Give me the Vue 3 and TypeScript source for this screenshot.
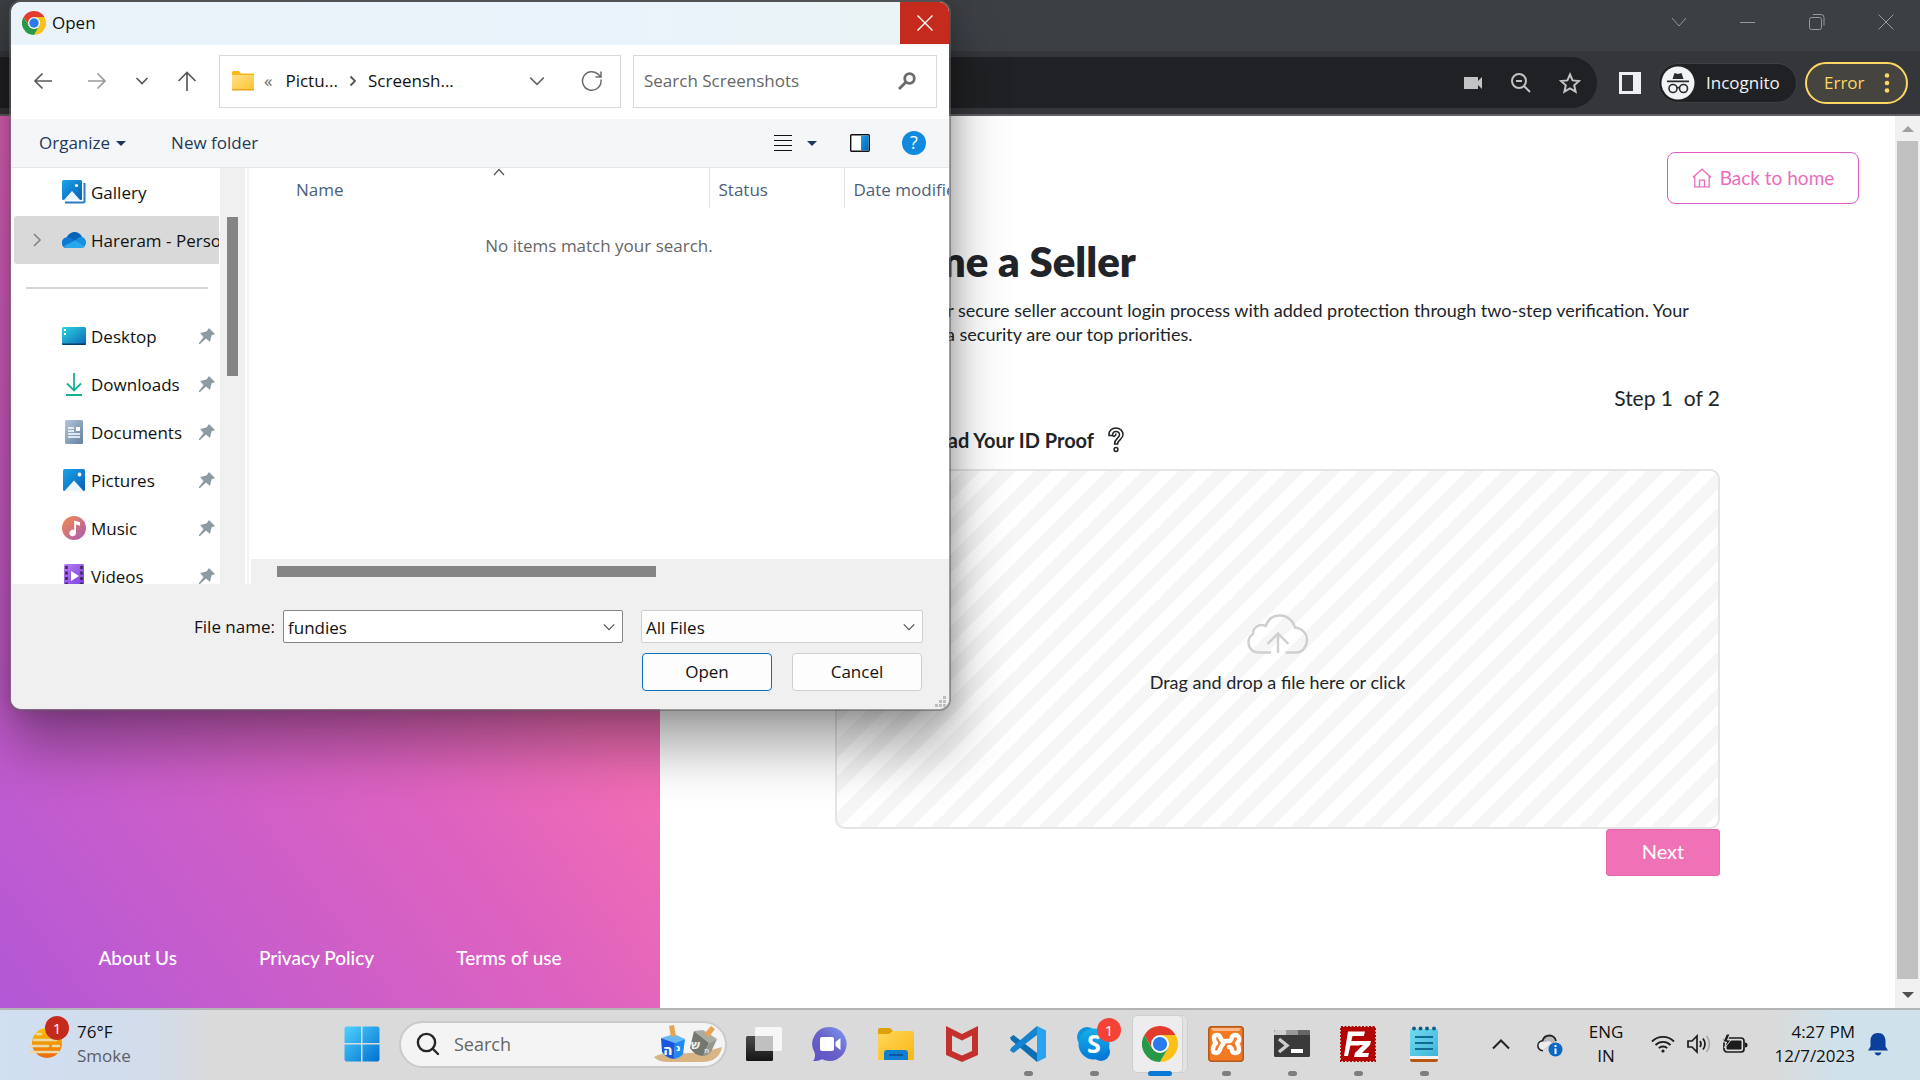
<script setup lang="ts">
import { ref } from 'vue'

interface Place {
  id: string
  label: string
  pinned: boolean
}

const places: Place[] = [
  { id: 'desktop', label: 'Desktop', pinned: true },
  { id: 'downloads', label: 'Downloads', pinned: true },
  { id: 'documents', label: 'Documents', pinned: true },
  { id: 'pictures', label: 'Pictures', pinned: true },
  { id: 'music', label: 'Music', pinned: true },
  { id: 'videos', label: 'Videos', pinned: true },
]

const footerLinks: string[] = ['About Us', 'Privacy Policy', 'Terms of use']
const fileName = ref('fundies')
const fileType = ref('All Files')
const query = ref('')
</script>

<template>
  <div class="desktop">
    <svg class="defs" width="0" height="0" aria-hidden="true">
      <defs>
        <linearGradient id="sky" x1="0" y1="0" x2="1" y2="1">
          <stop offset="0" stop-color="#1ca4ea" /><stop offset="1" stop-color="#0560b4" />
        </linearGradient>
        <linearGradient id="teal" x1="0" y1="0" x2="1" y2="1">
          <stop offset="0" stop-color="#2fd5e0" /><stop offset="1" stop-color="#0a66b8" />
        </linearGradient>
        <linearGradient id="slate" x1="0" y1="0" x2="1" y2="1">
          <stop offset="0" stop-color="#b4c6da" /><stop offset="1" stop-color="#64809f" />
        </linearGradient>
        <linearGradient id="sunset" x1="0" y1="0" x2="1" y2="1">
          <stop offset="0" stop-color="#f58c4b" /><stop offset="1" stop-color="#a75bb8" />
        </linearGradient>
        <linearGradient id="violet" x1="0" y1="0" x2="1" y2="1">
          <stop offset="0" stop-color="#b67cf0" /><stop offset="1" stop-color="#7b3be0" />
        </linearGradient>
        <linearGradient id="win" x1="0" y1="0" x2="1" y2="1">
          <stop offset="0" stop-color="#4fd2ff" /><stop offset="1" stop-color="#0070d0" />
        </linearGradient>
        <linearGradient id="manila" x1="0" y1="0" x2="1" y2="1">
          <stop offset="0" stop-color="#ffe08a" /><stop offset="1" stop-color="#fcc42e" />
        </linearGradient>
        <linearGradient id="folder" x1="0" y1="0" x2="1" y2="1">
          <stop offset="0" stop-color="#ffd75e" /><stop offset="1" stop-color="#f9b710" />
        </linearGradient>
        <linearGradient id="chat" x1="0" y1="1" x2="1" y2="0">
          <stop offset="0" stop-color="#5b50c4" /><stop offset=".5" stop-color="#6a62c8" /><stop offset="1" stop-color="#7d9cf2" />
        </linearGradient>
        <linearGradient id="sun" x1="0" y1="0" x2="0" y2="1">
          <stop offset="0" stop-color="#fcc400" /><stop offset="1" stop-color="#ea6a0a" />
        </linearGradient>
        <linearGradient id="skype" x1="0" y1="0" x2="0" y2="1">
          <stop offset="0" stop-color="#16b1ea" /><stop offset="1" stop-color="#0478d8" />
        </linearGradient>
        <linearGradient id="note" x1="0" y1="0" x2="1" y2="1">
          <stop offset="0" stop-color="#72dbf0" /><stop offset="1" stop-color="#3fb4d8" />
        </linearGradient>
        <linearGradient id="dark" x1="0" y1="0" x2="0" y2="1">
          <stop offset="0" stop-color="#4a4a4a" /><stop offset="1" stop-color="#151515" />
        </linearGradient>
        <symbol id="chrome-logo" viewBox="0 0 48 48">
          <circle cx="24" cy="24" r="24" fill="#fff" />
          <path d="M24 12h20.8A24 24 0 0 0 3.2 12l10.400 18z" fill="#e33b2e" />
          <path d="M34.400 30 24 48A24 24 0 0 0 44.800 12H24z" fill="#fbc116" />
          <path d="M13.600 30 3.200 12A24 24 0 0 0 24 48l10.400-18z" fill="#279847" />
          <circle cx="24" cy="24" r="12" fill="#fff" /><circle cx="24" cy="24" r="9.500" fill="#2b7bee" />
        </symbol>
        <symbol id="chev-down" viewBox="0 0 16 16">
          <path d="M2 5l6 6 6-6" fill="none" stroke="currentColor" stroke-width="1.400" />
        </symbol>
      </defs>
    </svg>

    <div class="browser">
      <header class="tabstrip">
        <button class="win-btn" aria-label="Search tabs"><svg width="16" height="16" viewBox="0 0 16 16"><path d="M1 4l7 8 7-8" /></svg></button>
        <button class="win-btn" aria-label="Minimize"><svg width="16" height="16" viewBox="0 0 16 16"><path d="M0 8.500h15" /></svg></button>
        <button class="win-btn" aria-label="Restore"><svg width="16" height="16" viewBox="0 0 16 16"><rect x=".5" y="3.500" width="12" height="12" rx="2" /><path d="M4 .5h8a3 3 0 0 1 3 3v8" /></svg></button>
        <button class="win-btn" aria-label="Close"><svg width="16" height="16" viewBox="0 0 16 16"><path d="M.5.5l15 15M15.500.5l-15 15" /></svg></button>
      </header>
      <div class="toolbar">
        <div class="omnibox">
          <svg width="20" height="20" viewBox="0 0 20 20" fill="#c2c3c5"><path d="M1 4h14v4l4-4v12l-4-4v4H1z" /></svg>
          <svg width="20" height="20" viewBox="0 0 20 20" fill="none" stroke="#c2c3c5" stroke-width="2"><circle cx="8" cy="8" r="7" /><path d="M13 13l6 6M5 8h6" /></svg>
          <svg width="22" height="22" viewBox="0 0 22 22" fill="none" stroke="#c2c3c5" stroke-width="2"><path d="M11 2.500l2.600 5.900 6.400.6-4.800 4.300 1.400 6.300L11 16.300l-5.600 3.300 1.400-6.300L2 9l6.400-.6z" /></svg>
        </div>
        <button class="panel-btn" aria-label="Side panel"><svg width="22" height="22" viewBox="0 0 22 22"><path fill-rule="evenodd" d="M0 0h22v22H0zM3 3v16h11V3z" fill="#eef0f3" /></svg></button>
        <button class="incognito">
          <svg width="34" height="34" viewBox="0 0 34 34">
            <circle cx="17" cy="17" r="16.500" fill="#f1f3f4" />
            <path d="M11.500 13l2-6 3.500 1 3.500-1 2 6zM6 14.500h22v1.800H6z" fill="#2a2b2e" />
            <g fill="none" stroke="#2a2b2e" stroke-width="1.600"><circle cx="12" cy="22.500" r="4" /><circle cx="22.500" cy="22.500" r="4" /><path d="M16 22q1.200-1 2.500 0" /></g>
          </svg>
          <span>Incognito</span>
        </button>
        <button class="error-btn">
          <span>Error</span>
          <svg width="6" height="20" viewBox="0 0 6 20" fill="#fdd663"><circle cx="3" cy="2.500" r="2.300" /><circle cx="3" cy="10" r="2.300" /><circle cx="3" cy="17.500" r="2.300" /></svg>
        </button>
      </div>

      <div class="viewport">
        <aside class="promo">
          <nav class="links"><a v-for="l in footerLinks" :key="l" href="#">{{ l }}</a></nav>
        </aside>
        <main class="page">
          <a class="home" href="#">
            <svg width="20" height="20" viewBox="0 0 20 20" fill="none" stroke="#ea6cbd" stroke-width="1.300"><path d="M.8 9.600L10 1.200l9.200 8.400M2.800 8.200v10.600h14.400V8.200M7.500 18.600v-6.400h5v6.400" /></svg>
            <span>Back to home</span>
          </a>
          <section class="form">
            <h1>Become a Seller</h1>
            <p class="lead">Experience our secure seller account login process with added protection through two-step verification. Your safety and data security are our top priorities.</p>
            <p class="step">Step 1 &nbsp;of 2</p>
            <label class="field" for="proof">Please Upload Your ID Proof
              <svg width="16" height="26" viewBox="0 0 16 26" fill="none" stroke="#212529" stroke-width="1.500"><path d="M1 8.500C.6 3.500 4 1 8 1s7 2.800 7 6.800c0 4.600-5.400 5-5.400 9.200H6.600c-.4-5 4.900-5.800 4.900-9.200 0-2-1.500-3.400-3.500-3.400-2.400 0-3.500 1.500-3.500 4.100zM4.600 8.800c1.500 1.400 3.400-.2 3.400-2.200" /><circle cx="8" cy="22.500" r="1.900" /></svg>
            </label>
            <button id="proof" class="dropzone">
              <svg width="62" height="40" viewBox="0 0 62 40" fill="none" stroke="#cfcfcf" stroke-width="2.400"><path d="M24 38.500H12C5.500 38.500 1.500 34 1.500 28.500c0-4 2-7 4.500-8.500 0-7 7-11 12.800-8C21 5 26 1.500 33 1.500s13 4.500 15 12C55 14.500 60 19 60 26c0 7-5 12.500-11 12.500H38.500M31 39V20M20.500 30L31 19.500 41.500 30" /></svg>
              <span>Drag and drop a file here or click</span>
            </button>
            <button class="next">Next</button>
          </section>
        </main>
        <div class="vscroll" aria-hidden="true"><i class="up"></i><i class="bar"></i><i class="down"></i></div>
      </div>
    </div>

    <footer class="taskbar">
      <div class="weather">
        <div class="weather-icon">
          <svg width="34" height="32" viewBox="0 0 34 32">
            <circle cx="18" cy="15" r="15" fill="url(#sun)" />
            <g stroke="#ecd9a8" stroke-width="2.600" stroke-linecap="round"><path d="M8 6h4M5 12h22M1 18h18M24 18h6M1 24h28" /></g>
          </svg>
          <span class="count">1</span>
        </div>
        <div class="stack"><span>76°F</span><span class="muted">Smoke</span></div>
      </div>
      <div class="apps">
        <button class="app" aria-label="Start">
          <svg width="36" height="36" viewBox="0 0 36 36"><path d="M2 .5h15V17H.5V2zM18.500.5H34L35.500 2v15h-17zM.5 18.500H17v17H2L.5 34zM18.500 18.500h17V34L34 35.500H18.500z" fill="url(#win)" /></svg>
        </button>
        <label class="searchbox">
          <svg width="24" height="24" viewBox="0 0 24 24" fill="none" stroke="#252525" stroke-width="2.400" stroke-linecap="round"><circle cx="10.500" cy="10.500" r="8.600" /><path d="M17 17l5 5" /></svg>
          <input type="text" placeholder="Search" aria-label="Search Windows" />
          <svg width="68" height="38" viewBox="0 0 68 38">
            <path d="M0 32q10-6 26-4 20 1 42-6-3 15-20 15H14Q4 37 0 32z" fill="#d9b585" />
            <path d="M7 13l13-4 11 5-10 4z" fill="#6ab8f2" /><path d="M7 13l14 5-1 16q-8-1-12-7z" fill="#1b56e0" /><path d="M21 18l10-4-2 15q-3 4-9 5z" fill="#1f8bf0" />
            <path d="M15 1l5-1 2 11-5 1z" fill="#e6a459" />
            <path d="M40 6l9-1 14 9-8 4z" fill="#a9aca4" /><path d="M40 6l15 12-6 13q-9-1-13-8z" fill="#74776f" /><path d="M55 18l8-4-6 13q-3 4-8 4z" fill="#94978e" />
            <path d="M57 1l4 3-6 8-5-3z" fill="#e6a459" />
            <text x="9" y="30" font-size="14" font-weight="bold" fill="#fff" font-family="DejaVu Sans, sans-serif">ה</text>
            <text x="22" y="26" font-size="10" font-weight="bold" fill="#fff" font-family="DejaVu Sans, sans-serif">נ</text>
            <text x="37" y="24" font-size="12" font-weight="bold" fill="#eee" font-family="DejaVu Sans, sans-serif">ש</text>
            <text x="50" y="28" font-size="8" font-weight="bold" fill="#ddd" font-family="DejaVu Sans, sans-serif">ח</text>
          </svg>
        </label>
        <button class="app" aria-label="Task view">
          <svg width="36" height="36" viewBox="0 0 36 36"><rect y="10" width="27" height="25" rx="1.500" fill="url(#dark)" /><rect x="9" y="1" width="27" height="24" rx="1.500" fill="#f7f7f7" /><path d="M9 10h18v15H10.500L9 23.500z" fill="#c0c0c0" /></svg>
        </button>
        <button class="app" aria-label="Chat">
          <svg width="36" height="36" viewBox="0 0 36 36"><path d="M18 1a17 17 0 1 1-8 32.200Q5 35.500 1 35q3-3 1.600-8.400A17 17 0 0 1 18 1z" fill="url(#chat)" /><rect x="8" y="11" width="14" height="14" rx="2" fill="#fff" /><path d="M23.500 16l5-4v12l-5-4z" fill="#fff" /></svg>
        </button>
        <button class="app" aria-label="File Explorer">
          <svg width="36" height="36" viewBox="0 0 36 36"><path d="M0 4q0-2 2-2h10l4 4v3H0z" fill="#e0a008" /><path d="M0 8h11l4-3h19q2 0 2 2v27H0z" fill="url(#folder)" /><path d="M6 34v-7q0-3 3-3h18q3 0 3 3v7z" fill="#0f7fd2" /><path d="M11 29h14" stroke="#0a559c" stroke-width="2" /></svg>
        </button>
        <button class="app" aria-label="McAfee">
          <svg width="36" height="36" viewBox="0 0 36 36"><path fill-rule="evenodd" d="M2 0l16 8 16-8v29l-16 7-16-7zM8 9.500v15.500l10 4.500L28 25V9.500L18 14.500z" fill="#c4302e" /></svg>
        </button>
        <button class="app running" aria-label="Visual Studio Code">
          <svg width="36" height="36" viewBox="0 0 36 36"><path d="M0 11.500L3.500 9 27 27v9L1 14z" fill="#0b6fb4" /><path d="M0 24.500L3.500 27 27 9V0L1 22z" fill="#1484ce" /><path d="M27 0l9 4.500v27L27 36z" fill="#27a3f0" /></svg>
        </button>
        <button class="app running" aria-label="Skype">
          <svg width="36" height="36" viewBox="0 0 36 36"><circle cx="11" cy="11" r="10" fill="#0e93dc" /><circle cx="25" cy="26" r="9" fill="#0a78d4" /><circle cx="18" cy="18" r="15.500" fill="url(#skype)" /><text x="18" y="27" font-size="25" font-weight="bold" text-anchor="middle" fill="#fff" font-family="Open Sans, sans-serif">S</text></svg>
          <span class="count bright">1</span>
        </button>
        <button class="app active" aria-label="Google Chrome"><span class="tile2"></span><span class="tile"></span><svg width="36" height="36"><use href="#chrome-logo" /></svg></button>
        <button class="app running" aria-label="XAMPP">
          <svg width="36" height="36" viewBox="0 0 36 36"><rect x=".8" y=".8" width="34.400" height="34.400" rx="3" fill="#f37a23" stroke="#b35a1c" stroke-width="1.600" /><path d="M3 2h30l-2 3H5z" fill="#f9b98a" /><g fill="none" stroke="#fff" stroke-width="4.400" stroke-linejoin="round" stroke-linecap="round"><path d="M15 18q0-3 3-3h4q2-2 2-4 1-2 3.500-2T31 12t-2 5q2 3 2 6.500T27 27q-3 0-3-3.500Q23 21 21 21" /><path d="M15 18q-2 2-3 5.500-1 3.500-4 3.500t-3-3.500T8 17q-2-2-2-5t3-3 3.500 3q1 3 4 3.500" /></g></svg>
        </button>
        <button class="app running" aria-label="Terminal">
          <svg width="36" height="36" viewBox="0 0 36 36"><rect y="4" width="36" height="27" rx="1.500" fill="#3a3a3a" /><path d="M1.500 4H12v5H0V5.500z" fill="#cfcfcf" /><path d="M12 4h12v5H12z" fill="#999" /><path d="M24 4h10.500L36 5.500V9H24z" fill="#666" /><path d="M5 13l8 6.500L5 26" fill="none" stroke="#ccc" stroke-width="3.400" /><path d="M17 23h12v4H17z" fill="#fff" /></svg>
        </button>
        <button class="app running" aria-label="FileZilla">
          <svg width="36" height="36" viewBox="0 0 36 36"><rect x="1" y="1" width="34" height="34" fill="#b30404" stroke="#b30404" stroke-width="2" stroke-dasharray="2 1.500" /><path d="M8 5.500h17l-1.200 4.500H12.500L11.400 15h9l-1 4.500h-9L8 30H4z" fill="#fff" /><path d="M17 15h14l-1 4-8 8h7l-1 4H14l1-4 8-8h-7z" fill="#fff" /></svg>
        </button>
        <button class="app running" aria-label="Notepad">
          <svg width="36" height="36" viewBox="0 0 36 36"><path d="M4 31h28v2q0 3-2 3H6q-2 0-2-3z" fill="#b9560f" /><path d="M4 28h28v5H4z" fill="#f3f3f3" /><path d="M4 5q0-2 2-2h24q2 0 2 2v25H4z" fill="url(#note)" /><path d="M9 11h18M9 17h18M9 23h18" stroke="#0f6b96" stroke-width="2" /><g fill="#12597c"><circle cx="8" cy="2.500" r="1.900" /><circle cx="14.500" cy="2.500" r="1.900" /><circle cx="21" cy="2.500" r="1.900" /><circle cx="28" cy="2.500" r="1.900" /></g></svg>
        </button>
      </div>
      <div class="tray">
        <svg width="18" height="12" viewBox="0 0 18 12" fill="none" stroke="#222" stroke-width="2"><path d="M1 10.500l8-8 8 8" /></svg>
        <svg class="cloud" width="26" height="26" viewBox="0 0 26 26"><path d="M6 19.500C2.500 19.500 1 17 1 14.500S3 10 5.500 10C6.500 6 9.500 4.500 12.500 4.500S18.500 6.500 19 10" fill="#b9b9b9" stroke="#222" stroke-width="1.800" /><path d="M1.500 14C3 10.500 6 10 8 11l4-1 3 2-9 7q-4-.5-4.500-5z" fill="#eee" /><circle cx="18.500" cy="18.500" r="7" fill="#0d67c4" /><path d="M18.500 14v2M18.500 17.500V23" stroke="#fff" stroke-width="2" /></svg>
        <div class="stack lang"><span>ENG</span><span>IN</span></div>
        <svg width="24" height="20" viewBox="0 0 24 20" fill="none" stroke="#1c1c1c" stroke-width="1.800"><path d="M1 7.500a15.500 15.500 0 0 1 22 0M4.500 11a10.500 10.500 0 0 1 15 0M7.800 14.200a6 6 0 0 1 8.400 0" /><circle cx="12" cy="17" r="1.600" fill="#1c1c1c" stroke="none" /></svg>
        <svg class="vol" width="24" height="20" viewBox="0 0 24 20" fill="none" stroke="#1c1c1c" stroke-width="1.700"><path d="M1 7h4l5-5v16l-5-5H1z" /><path d="M13 7q2 3 0 6M16 4.500q4 5.500 0 11" /><path d="M19.500 2q6 8 0 16" stroke="#aaa" /></svg>
        <svg class="bat" width="26" height="20" viewBox="0 0 26 20"><rect x="2" y="4" width="20" height="14" rx="3" fill="none" stroke="#1c1c1c" stroke-width="1.700" /><rect x="4.500" y="6.500" width="15" height="9" rx="1" fill="#1c1c1c" /><path d="M23 8.500q2.500 0 2.500 2.500T23 13.500z" fill="#1c1c1c" /><path d="M4.500 0L1 8h3.500l-2 6L9 6H5.500L8 0z" fill="#1c1c1c" stroke="#dadada" /></svg>
        <div class="stack clock"><span>4:27 PM</span><span>12/7/2023</span></div>
        <svg class="bell" width="20" height="24" viewBox="0 0 20 24" fill="#0a3f9a"><path d="M10 1c5 0 7.500 3.500 7.500 8v5.500L20 18.500H0l2.500-4V9C2.500 4.500 5 1 10 1zM6.500 20.500h7q-1 3-3.500 3t-3.500-3z" /></svg>
      </div>
    </footer>

    <div class="dialog" role="dialog" aria-label="Open">
      <div class="titlebar">
        <svg width="24" height="24"><use href="#chrome-logo" /></svg>
        <span>Open</span>
        <button class="close" aria-label="Close dialog"><svg width="16" height="16" viewBox="0 0 16 16" stroke="#fff" stroke-width="1.400"><path d="M.5.5l15 15M15.500.5l-15 15" /></svg></button>
      </div>
      <div class="navrow">
        <button class="nav back" aria-label="Back"><svg width="20" height="20" viewBox="0 0 20 20"><path d="M19 10H2M9.500 2.500L2 10l7.500 7.500" /></svg></button>
        <button class="nav dim" aria-label="Forward"><svg width="20" height="20" viewBox="0 0 20 20"><path d="M1 10h17M10.500 2.500L18 10l-7.500 7.500" /></svg></button>
        <button class="nav slim" aria-label="Recent"><svg width="14" height="14" viewBox="0 0 14 14"><path d="M1.500 4L7 9.500 12.500 4" /></svg></button>
        <button class="nav dim-none" aria-label="Up"><svg width="20" height="20" viewBox="0 0 20 20"><path d="M10 20V1.500M1.500 10L10 1.500l8.500 8.500" /></svg></button>
        <div class="address">
          <svg width="24" height="20" viewBox="0 0 24 20"><path d="M1 1.500Q1 0 2.500 0H8l2 2.500h12q1 0 1 1V5H1z" fill="#f9b91c" /><path d="M1 4h22v15H1z" fill="url(#manila)" /><path d="M1 18h22v1.500H1z" fill="#e9a51a" /></svg>
          <span class="laquo">«</span>
          <span>Pictu...</span>
          <svg class="sep" width="8" height="12" viewBox="0 0 8 12" fill="none" stroke="#555" stroke-width="1.800"><path d="M1.500 1.500L6 6l-4.500 4.500" /></svg>
          <span>Screensh...</span>
          <svg class="drop" width="18" height="18"><use href="#chev-down" /></svg>
          <svg class="refresh" width="22" height="22" viewBox="0 0 22 22" fill="none" stroke="#6b6b6b" stroke-width="1.500"><path d="M20 9.500A9.300 9.300 0 1 1 17.500 4.500L20 7M20 1.500V7h-5.500" /></svg>
        </div>
        <div class="find">
          <input v-model="query" type="text" placeholder="Search Screenshots" aria-label="Search Screenshots" />
          <svg width="18" height="18" viewBox="0 0 18 18" fill="none" stroke="#6b6b6b"><circle cx="11.500" cy="6.500" r="4.800" stroke-width="2.800" /><path d="M8 10l-7 7" stroke-width="2.800" /></svg>
        </div>
      </div>
      <div class="cmdrow">
        <button class="cmd">Organize<i class="tri"></i></button>
        <button class="cmd">New folder</button>
        <button class="cmd icon push" aria-label="View"><svg width="20" height="18" viewBox="0 0 20 18" stroke="#111" stroke-width="1"><path d="M1 1.500h18M1 6.500h18M1 11.500h18M1 16.500h18" /></svg></button>
        <button class="cmd icon more" aria-label="More views"><i class="tri"></i></button>
        <button class="cmd icon pane" aria-label="Preview pane"><svg width="20" height="18" viewBox="0 0 20 18"><rect x=".7" y=".7" width="18.600" height="16.600" rx="1" fill="#fff" stroke="#111" stroke-width="1.400" /><path d="M11 1.400h7.600v15.200H11z" fill="url(#sky)" /></svg></button>
        <button class="cmd icon" aria-label="Help"><svg width="24" height="24" viewBox="0 0 24 24"><circle cx="12" cy="12" r="12" fill="#108ade" /><text x="12" y="18" font-size="18" text-anchor="middle" fill="#fff" font-family="Open Sans, sans-serif">?</text></svg></button>
      </div>
      <div class="panes">
        <ul class="tree">
          <li><span class="exp"></span>
            <svg width="24" height="24" viewBox="0 0 24 24"><path d="M3 22.500h18q1.500 0 1.500-1.500V3" fill="none" stroke="#2b7cc8" stroke-width="2" /><rect width="20" height="20" rx="1.500" fill="url(#sky)" /><path d="M2 20l8-9 8 9z" fill="#eaf5fd" /><circle cx="14.500" cy="5.500" r="1.600" fill="#fff" /></svg>
            <span>Gallery</span></li>
          <li class="sel">
            <svg class="exp" width="10" height="14" viewBox="0 0 10 14" fill="none" stroke="#858585" stroke-width="1.600"><path d="M2 1l6 6-6 6" /></svg>
            <svg width="24" height="24" viewBox="0 0 24 24"><path d="M4.500 10C6 6.500 9 4 12.500 4c3.500 0 6.500 2 7.500 5l-8 6z" fill="#0564b8" /><path d="M3 20a5.500 5.500 0 0 1-2.500-8C3 8.500 7 8.500 9 10l6 4z" fill="#0f78d4" /><path d="M12 13l5-3.500c3-1.500 7 .5 7 5 0 2-1 3-2 4z" fill="#1490df" /><path d="M2 18l11-5.500 10 6Q22 20 19 20H5q-2 0-3-2z" fill="#28a8ea" /></svg>
            <span>Hareram - Personal</span></li>
          <li class="rule" aria-hidden="true"></li>
          <li v-for="p in places" :key="p.id">
            <span class="exp"></span>
            <svg v-if="p.id === 'desktop'" width="24" height="24" viewBox="0 0 24 24"><rect y="3" width="24" height="18" rx="1.500" fill="url(#teal)" /><path d="M2 5h2v2H2zM2 9h2v2H2z" fill="#fff" /><path d="M0 19.500h24V20q0 1-1.500 1h-21Q0 21 0 20z" fill="#0b3c66" /></svg>
            <svg v-else-if="p.id === 'downloads'" width="24" height="24" viewBox="0 0 24 24" fill="none" stroke="#14b295" stroke-width="1.800"><path d="M12 1v17M5 11.500l7 7 7-7M4 23h16" /></svg>
            <svg v-else-if="p.id === 'documents'" width="24" height="24" viewBox="0 0 24 24"><rect x="3" width="18" height="24" rx="1.500" fill="url(#slate)" /><path d="M6 8h6M6 11h6M6 14h12M6 17h12" stroke="#fff" stroke-width="1.300" /><path d="M14 7h4v4h-4z" fill="#fff" /></svg>
            <svg v-else-if="p.id === 'pictures'" width="24" height="24" viewBox="0 0 24 24"><rect x="1" y="1" width="22" height="22" rx="1.500" fill="url(#sky)" /><path d="M2.500 23L12 12.500 21.500 23z" fill="#eaf5fd" /><circle cx="17.500" cy="6.500" r="1.900" fill="#fff" /></svg>
            <svg v-else-if="p.id === 'music'" width="24" height="24" viewBox="0 0 24 24"><circle cx="12" cy="12" r="12" fill="url(#sunset)" /><path d="M12.200 4.500l5.800 1.800v3.400l-4-1.200V17a3.300 3.300 0 1 1-1.800-3z" fill="#fff" /></svg>
            <svg v-else width="24" height="24" viewBox="0 0 24 24"><rect x="2" y="0" width="20" height="24" rx="1.500" fill="url(#violet)" /><path d="M4.500 2v22M19.500 2v22" stroke="#3a2a5c" stroke-width="2.600" stroke-dasharray="3 2.500" /><path d="M9 7l8 5-8 5z" fill="#fff" /></svg>
            <span>{{ p.label }}</span>
            <svg v-if="p.pinned" class="pin" width="16" height="16" viewBox="0 0 16 16"><path d="M10 0l6 6-3.500 1.500L11 14l-4-3.500L1 16H0v-1l4.500-6L1 5l6.500-1.500z" fill="#8f9ba3" /></svg>
          </li>
        </ul>
        <div class="tree-scroll" aria-hidden="true"><i></i></div>
        <div class="list">
          <svg class="sort" width="12" height="8" viewBox="0 0 12 8" fill="none" stroke="#555" stroke-width="1.200"><path d="M1 7l5-5.500L11 7" /></svg>
          <table>
            <thead><tr><th class="c-name">Name</th><th class="c-status">Status</th><th class="c-date">Date modified</th></tr></thead>
          </table>
          <p class="empty">No items match your search.</p>
          <div class="hscroll" aria-hidden="true"><i></i></div>
        </div>
      </div>
      <form class="actions" @submit.prevent>
        <div class="line">
          <label for="fname">File name:</label>
          <div class="combo name"><input id="fname" v-model="fileName" type="text" /><svg width="14" height="14"><use href="#chev-down" /></svg></div>
          <div class="combo type"><select v-model="fileType" aria-label="File type"><option>All Files</option></select><svg width="14" height="14"><use href="#chev-down" /></svg></div>
        </div>
        <div class="line btns">
          <button class="primary">Open</button>
          <button type="button">Cancel</button>
        </div>
        <svg class="grip" width="12" height="12" viewBox="0 0 12 12" fill="#bdbdbd"><path d="M8 0h3v3H8zM4 4h3v3H4zM8 4h3v3H8zM0 8h3v3H0zM4 8h3v3H4zM8 8h3v3H8z" /></svg>
      </form>
    </div>
  </div>
</template>

<style>
body { margin: 0; overflow: hidden; }
</style>

<style scoped>
* { box-sizing: border-box; }
button, input, select { font: inherit; color: inherit; margin: 0; padding: 0; border: 0; background: none; outline: none; }
svg { display: block; flex: none; }
a { text-decoration: none; }
.defs { position: absolute; }
.desktop {
  position: relative; display: flex; flex-direction: column; min-height: 100vh; overflow: hidden;
  font: 17px/24px "Open Sans", "Noto Sans", sans-serif; color: #111;
}
.browser { flex: 1; display: flex; flex-direction: column; }
.tabstrip { height: 51px; background: #3c4043; display: flex; justify-content: flex-end; align-items: flex-start; }
.win-btn { width: 69px; height: 43px; display: grid; place-items: center; }
.win-btn svg { fill: none; stroke: #96999b; stroke-width: 1; }
.toolbar { height: 65px; background: #35363a; border-bottom: 2px solid #5f6063; display: flex; align-items: center; padding-right: 12px; }
.omnibox { flex: 1; height: 51px; border-radius: 0 26px 26px 0; background: #202124; display: flex; align-items: center; justify-content: flex-end; gap: 28px; padding-right: 16px; }
.panel-btn { margin: 0 17px 0 22px; }
.incognito { width: 139px; height: 40px; border: 1px solid #3f4043; border-radius: 20px; background: #202124; color: #f1f3f4; display: flex; align-items: center; gap: 11px; padding-left: 2px; margin-right: 8px; }
.error-btn { width: 103px; height: 42px; border: 2px solid #fdd663; border-radius: 21px; background: #46443e; color: #fdd663; display: flex; align-items: center; justify-content: space-between; padding: 0 16px 0 17px; }

.viewport { flex: 1; display: flex; background: #fff; }
.promo { width: 660px; background: linear-gradient(to top right, #b358d6, #dd62c0 44%, #f06cb4 61%); display: flex; align-items: flex-end; justify-content: center; padding-bottom: 38px; }
.links { display: flex; gap: 82px; font: 500 19px/24px Lato, sans-serif; }
.links a { color: #fff; }
.page { flex: 1; padding: 36px 36px 0; font-family: Lato, sans-serif; color: #212529; display: flex; flex-direction: column; }
.home { align-self: flex-end; width: 192px; height: 52px; border: 1px solid #dc5cc0; border-radius: 8px; display: flex; align-items: center; justify-content: center; gap: 8px; color: #ea6cbd; font-size: 19px; }
.form { width: 100%; max-width: 885px; margin: 0 auto; display: flex; flex-direction: column; }
h1 { margin: 31px 0 0; font-size: 42px; line-height: 52px; font-weight: 800; }
.lead { margin: 11px 0 0; font-size: 18px; line-height: 24px; }
.step { margin: 40px 0 0; text-align: right; font-size: 21px; line-height: 24px; }
.field { display: flex; align-items: center; gap: 14px; margin-top: 16px; padding: 0 8px; font-size: 20px; line-height: 28px; font-weight: 700; }
.dropzone {
  height: 360px; margin-top: 15px; padding-top: 9px; border: 2px solid #e5e5e5; border-radius: 10px; font-size: 18px;
  display: flex; flex-direction: column; align-items: center; justify-content: center; gap: 16px;
  background: linear-gradient(-45deg, #f6f6f6 25%, #fff 25%, #fff 50%, #f6f6f6 50%, #f6f6f6 75%, #fff 75%) 0 0 / 36px 36px;
}
.next { align-self: flex-end; width: 114px; height: 47px; padding-bottom: 4px; border-radius: 3px; background: #f072b6; border: 1px solid #e868b0; color: #fff; font-size: 20px; }
.vscroll { width: 25px; background: #f1f1f1; padding: 10px 0; display: flex; flex-direction: column; align-items: center; }
.vscroll .up, .vscroll .down { border: 6px solid transparent; border-top: 0; border-bottom-color: #a0a0a0; }
.vscroll .bar { width: 21px; flex: 1; background: #c1c1c1; margin: 9px 0 13px; }
.vscroll .down { border-top: 6px solid #505050; border-bottom: 0; }

.taskbar {
  height: 72px; border-top: 2px solid #b2b4b5; display: flex; align-items: center; padding-bottom: 2px;
  background: linear-gradient(90deg, #d0dff1, #d2dceb 150px, #dadada 215px, #dadada calc(100% - 150px), #cfe2ec calc(100% - 80px));
}
.weather { flex: 1; display: flex; align-items: center; gap: 14px; padding-left: 29px; }
.weather-icon { position: relative; }
.count { position: absolute; left: 16px; top: -12px; width: 24px; height: 24px; border-radius: 12px; background: #c42b1c; color: #fff; text-align: center; font-size: 15px; line-height: 24px; }
.count.bright { left: 36px; top: 8px; background: #f44336; }
.stack { display: flex; flex-direction: column; line-height: 24px; }
.muted { color: #5c5f64; }
.apps { display: flex; align-items: center; }
.app { position: relative; width: 66px; height: 68px; display: grid; place-items: center; }
.app > svg { position: relative; }
.running::after { content: ""; position: absolute; left: 29px; bottom: 2px; width: 9px; height: 5px; border-radius: 3px; background: #7e7e7e; }
.active::after { content: ""; position: absolute; left: 21px; bottom: 2px; width: 24px; height: 5px; border-radius: 3px; background: #0a78d6; }
.tile, .tile2 { position: absolute; left: 5px; top: 5px; width: 51px; height: 58px; border-radius: 5px; background: #ededed; border: 1px solid #cfcfcf; }
.tile2 { width: 56px; background: #e2e2e2; }
.searchbox { width: 328px; height: 47px; margin: 0 4px; border: 2px solid #cacaca; border-radius: 24px; background: #f4f4f4; display: flex; align-items: center; padding: 0 3px 0 15px; }
.searchbox input { flex: 1; min-width: 0; margin-left: 14px; font-size: 18px; }
input::placeholder { color: #666; opacity: 1; }
.tray { width: 463px; display: flex; align-items: center; padding-left: 35px; }
.cloud { margin-left: 27px; }
.lang { width: 48px; margin: 0 21px 0 19px; text-align: center; }
.vol { margin-left: 12px; }
.bat { margin-left: 11px; }
.clock { flex: 1; text-align: right; }
.bell { margin: 0 32px 0 13px; }

.dialog {
  position: absolute; left: 9px; top: 0; width: 942px; border: 2px solid rgba(96, 96, 96, .6); border-radius: 12px; background: #fff;
  background-clip: padding-box; box-shadow: 0 36px 56px rgba(0, 0, 0, .36), 0 0 24px rgba(0, 0, 0, .2); overflow: hidden;
}
.titlebar { height: 43px; padding: 0 0 2px 11px; background: linear-gradient(90deg, #eaf3fa, #eaf3fb 65%, #ebf3f5); display: flex; align-items: center; gap: 6px; }
.close { margin-left: auto; align-self: flex-start; flex: none; width: 49px; height: 42px; background: #c42b1c; display: grid; place-items: center; }
.navrow { height: 74px; display: flex; align-items: center; padding: 0 12px 2px 10px; }
.nav { width: 65px; height: 40px; display: grid; place-items: center; }
.nav.back { width: 43px; }
.nav.slim { width: 25px; }
.nav svg { fill: none; stroke: #5b5b5b; stroke-width: 1.7; }
.nav.dim svg { stroke: #9a9a9a; }
.address { width: 402px; height: 53px; border: 1px solid #d9d9d9; display: flex; align-items: center; padding-left: 11px; }
.laquo { margin: 0 13px 0 9px; color: #666; }
.sep { margin: 0 11px; }
.drop { margin-left: auto; color: #666; }
.refresh { margin: 0 17px 0 35px; }
.find { flex: 1; height: 53px; margin-left: 12px; border: 1px solid #d9d9d9; display: flex; align-items: center; padding: 0 20px 0 10px; }
.find input { flex: 1; min-width: 0; }
.cmdrow { height: 49px; background: #f4f6f8; border-bottom: 1px solid #e6e6e6; display: flex; align-items: center; padding: 0 23px 0 28px; color: #1e395b; }
.cmd { display: flex; align-items: center; margin-right: 45px; }
.cmd.icon { margin-right: 0; }
.tri { border: 5px solid transparent; border-top-color: #1e395b; border-bottom: 0; margin-left: 6px; }
.cmd.push { margin-left: auto; }
.cmd.more { margin: 0 33px 0 8px; }
.cmd.pane { margin-right: 32px; }
.panes { height: 416px; display: flex; overflow: hidden; }
.tree { width: 209px; margin: 0; padding: 0; list-style: none; overflow: hidden; }
.tree li { height: 48px; display: flex; align-items: center; gap: 5px; margin-left: 3px; padding-left: 18px; white-space: nowrap; }
.tree li > span { padding-top: 2px; }
.tree .exp { width: 10px; flex: none; margin-right: 15px; }
.tree li.sel { background: #d9d9d9; border-radius: 3px 0 0 3px; overflow: hidden; margin-right: 1px; }
.tree li.rule::before { content: ""; height: 2px; width: 182px; background: #d5d5d5; margin-left: -6px; }
.pin { margin: 0 5px 0 auto; }
.tree-scroll { width: 25px; background: #f0f0f0; padding: 49px 0 0 7px; }
.tree-scroll i { display: block; width: 11px; height: 159px; background: #858585; }
.list { position: relative; flex: 1; min-width: 0; margin-left: 2px; border-left: 2px solid #f4f4f4; display: flex; flex-direction: column; overflow: hidden; }
.sort { position: absolute; left: 244px; top: 0; }
table { width: 860px; flex: none; table-layout: fixed; border-collapse: collapse; }
th { height: 40px; font-weight: 400; text-align: left; color: #4c607a; padding: 4px 0 0 9px; border-left: 1px solid #e2e2e2; }
.c-name { width: 460px; padding-left: 47px; border-left: 0; }
.c-status { width: 135px; }
.empty { margin: 26px 0 0; text-align: center; color: #666; }
.hscroll { margin: auto 0 0 2px; height: 25px; background: #f0f0f0; padding: 7px 0 0 26px; }
.hscroll i { display: block; width: 379px; height: 11px; background: #858585; }
.actions { position: relative; height: 125px; background: #f0f0f0; padding: 26px 26px 0 0; }
.line { display: flex; justify-content: flex-end; align-items: center; }
.line label { margin-right: 8px; }
.combo { position: relative; height: 33px; border: 1px solid #858585; border-radius: 2px; background: #fff; }
.combo input, .combo select { width: 100%; height: 100%; padding: 2px 0 0 4px; appearance: none; }
.combo svg { position: absolute; right: 6px; top: 9px; color: #555; pointer-events: none; }
.name { width: 340px; margin-right: 18px; }
.type { width: 282px; background: #fdfdfd; border-color: #cfcfcf; }
.btns { margin-top: 10px; gap: 20px; padding-right: 1px; }
.btns button { width: 130px; height: 38px; border: 1px solid #cfcfcf; border-radius: 4px; background: #fdfdfd; }
.btns .primary { border-color: #0a6fc2; }
.grip { position: absolute; right: 2px; bottom: 1px; }
</style>
